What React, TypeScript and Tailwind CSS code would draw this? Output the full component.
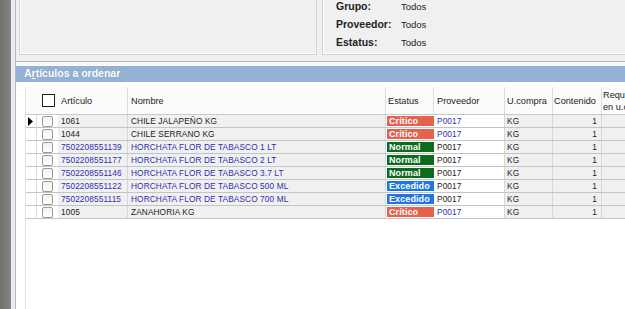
import React from "react";

type Estatus = "Crítico" | "Normal" | "Excedido";

type Articulo = {
  articulo: string;
  nombre: string;
  estatus: Estatus;
  proveedor: string;
  ucompra: string;
  contenido: number;
};

const rows: Articulo[] = [
  { articulo: "1061", nombre: "CHILE JALAPEÑO KG", estatus: "Crítico", proveedor: "P0017", ucompra: "KG", contenido: 1 },
  { articulo: "1044", nombre: "CHILE SERRANO KG", estatus: "Crítico", proveedor: "P0017", ucompra: "KG", contenido: 1 },
  { articulo: "7502208551139", nombre: "HORCHATA FLOR DE TABASCO 1 LT", estatus: "Normal", proveedor: "P0017", ucompra: "KG", contenido: 1 },
  { articulo: "7502208551177", nombre: "HORCHATA FLOR DE TABASCO 2 LT", estatus: "Normal", proveedor: "P0017", ucompra: "KG", contenido: 1 },
  { articulo: "7502208551146", nombre: "HORCHATA FLOR DE TABASCO 3.7 LT", estatus: "Normal", proveedor: "P0017", ucompra: "KG", contenido: 1 },
  { articulo: "7502208551122", nombre: "HORCHATA FLOR DE TABASCO 500 ML", estatus: "Excedido", proveedor: "P0017", ucompra: "KG", contenido: 1 },
  { articulo: "7502208551115", nombre: "HORCHATA FLOR DE TABASCO 700 ML", estatus: "Excedido", proveedor: "P0017", ucompra: "KG", contenido: 1 },
  { articulo: "1005", nombre: "ZANAHORIA KG", estatus: "Crítico", proveedor: "P0017", ucompra: "KG", contenido: 1 },
];

const badgeColor: Record<Estatus, string> = {
  "Crítico": "bg-[#e5624f]",
  Normal: "bg-[#0c6b1c]",
  Excedido: "bg-[#1f76e0]",
};

const filtros = [
  { label: "Grupo:", value: "Todos" },
  { label: "Proveedor:", value: "Todos" },
  { label: "Estatus:", value: "Todos" },
];

function RowArrow() {
  return (
    <svg width="6" height="9" viewBox="0 0 6 9">
      <path d="M1 0 L6 4.5 L1 9 Z" fill="#000" />
    </svg>
  );
}

export default function App() {
  return (
    <div className="flex w-[625px] h-[309px] overflow-hidden bg-white font-['Liberation_Sans',Arial,sans-serif] text-black">
      <div className="w-[11px] shrink-0 bg-gradient-to-r from-[#6f6f6f] to-[#858585]" />
      <div className="w-[4px] shrink-0 bg-[#ececec]" />

      <div className="flex-1 flex flex-col border-l border-[#a9bbd0] min-w-0">
        {/* filtros */}
        <div className="h-[62px] shrink-0 flex gap-[5px] pl-[3px] bg-[#f0f0f0] border-b border-[#a8b8cb]">
          <div className="w-[298px] h-[55px] border border-t-0 border-[#d3d3d3] shadow-[inset_1px_0_0_#fff,inset_0_-1px_0_#fff]" />
          <div className="flex-1 h-[55px] flex flex-col justify-end pb-[2px] pl-[13px] border-l border-b border-[#d3d3d3] shadow-[inset_1px_0_0_#fff,inset_0_-1px_0_#fff] overflow-hidden">
            {filtros.map((f) => (
              <div key={f.label} className="h-[18px] flex items-center shrink-0">
                <span className="w-[65px] text-[10.5px] font-bold text-[#222]">{f.label}</span>
                <span className="text-[9.5px] text-[#222]">{f.value}</span>
              </div>
            ))}
          </div>
        </div>

        <div className="h-[4px] shrink-0 bg-[#f7f9fb]" />

        <div className="h-[16px] shrink-0 flex items-center pl-[8px] bg-[#95b2d5] text-white text-[10.5px] font-bold [text-shadow:0_0_1px_#6f8fb5]">
          A<span className="underline">r</span>tículos a ordenar
        </div>

        {/* grid */}
        <div className="flex-1 pt-[5px] pl-[9px]">
          <div className="h-full border-l border-[#e2e2e2] flex flex-col text-[#222]">
            <div className="h-[28px] flex bg-[#fbfbfb] border-b border-[#c9c9c9] text-[9.2px] leading-[12px]">
              <div className="w-[32px] shrink-0 flex items-center justify-end pr-[3px]">
                <div className="w-[13px] h-[13px] border-[1.5px] border-[#1e1e1e] bg-white" />
              </div>
              <div className="w-[70px] shrink-0 flex items-center pl-[3px] border-r border-[#dedede]">Artículo</div>
              <div className="w-[258px] shrink-0 flex items-center pl-[3px] border-r border-[#dedede]">Nombre</div>
              <div className="w-[48px] shrink-0 flex items-center pl-[2px] border-r border-[#dedede]">Estatus</div>
              <div className="w-[71px] shrink-0 flex items-center pl-[3px] border-r border-[#dedede]">Proveedor</div>
              <div className="w-[48px] shrink-0 flex items-center pl-[2px] border-r border-[#dedede]">U.compra</div>
              <div className="w-[49px] shrink-0 flex items-center pl-[1px] border-r border-[#dedede]">Contenido</div>
              <div className="flex-1 flex items-center pl-[1px] whitespace-nowrap overflow-hidden">
                Requerido<br />en u.compra
              </div>
            </div>

            {rows.map((r, i) => {
              const blue = r.articulo.length > 6;
              const provBlue = r.estatus === "Crítico";
              return (
                <div key={r.articulo} className="h-[13px] flex border-b border-[#c4c4c4] text-[8.3px] leading-[12px] tracking-[0.1px]">
                  <div className="w-[11px] shrink-0 flex items-center pl-[1px] border-r border-[#dcdcdc] bg-white">
                    {i === 0 && <RowArrow />}
                  </div>
                  <div className="w-[21px] shrink-0 flex items-center justify-center bg-white">
                    <div className="w-[11px] h-[11px] rounded-[2px] border border-[#9a9a9a] bg-gradient-to-b from-[#f2f2f2] to-[#ffffff]" />
                  </div>
                  <div className={`w-[70px] shrink-0 flex items-center pl-[3px] border-r border-[#d6d6d6] bg-[#f0f0f0] ${blue ? "text-[#2f2fae]" : ""}`}>{r.articulo}</div>
                  <div className={`w-[258px] shrink-0 flex items-center pl-[3px] border-r border-[#d6d6d6] bg-[#f0f0f0] ${blue ? "text-[#2f2fae]" : ""}`}>{r.nombre}</div>
                  <div className="w-[48px] shrink-0 py-[1px] pl-[1px] bg-white">
                    <div className={`h-full flex items-center pl-[2px] text-white font-bold text-[9px] ${badgeColor[r.estatus]}`}>{r.estatus}</div>
                  </div>
                  <div className={`w-[71px] shrink-0 flex items-center pl-[3px] border-r border-[#d6d6d6] bg-white ${provBlue ? "text-[#2f2fae]" : ""}`}>{r.proveedor}</div>
                  <div className="w-[48px] shrink-0 flex items-center pl-[2px] border-r border-[#d6d6d6] bg-[#f0f0f0]">{r.ucompra}</div>
                  <div className="w-[49px] shrink-0 flex items-center justify-end pr-[4px] border-r border-[#d6d6d6] bg-[#f0f0f0]">{r.contenido}</div>
                  <div className="flex-1 bg-[#f0f0f0]" />
                </div>
              );
            })}
          </div>
        </div>
      </div>
    </div>
  );
}
